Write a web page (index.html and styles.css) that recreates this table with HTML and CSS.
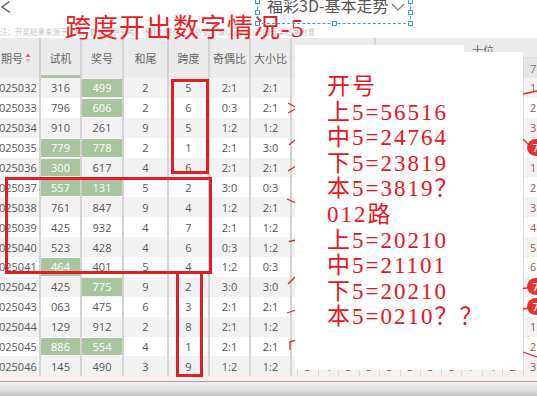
FILE: index.html
```html
<!DOCTYPE html>
<html lang="zh-CN">
<head>
<meta charset="utf-8">
<title>福彩3D-基本走势</title>
<link rel="stylesheet" href="styles.css">
</head>
<body>
<div class="page">
  <header class="topbar">
    <div class="nav">
      <svg class="back" width="12" height="14" viewBox="0 0 12 14"><polyline points="9.5,1.5 2,7 10,12.5" fill="none" stroke="#555" stroke-width="1.3"/></svg>
      <div class="apptitle">福彩3D-基本走势<svg class="caret" width="14" height="8" viewBox="0 0 14 8"><polyline points="1,1 7,7 13,1" fill="none" stroke="#777" stroke-width="1.2"/></svg></div>
    </div>
    <div class="note">注：开奖结果来源于网络，数据仅供参考，不作为最终兑奖依据，请以官方公布的开奖结果为准</div>
  </header>

  <div class="table">
    <div class="thead">
      <div class="hc qh w-qh">期号<svg class="sort" width="6" height="10" viewBox="0 0 6 10"><path d="M3 0.5 L5.6 4 H0.4Z" fill="#e85454"/><path d="M3 9.5 L5.6 6 H0.4Z" fill="#bdbdbd"/></svg></div>
      <div class="hc sj w-sj">试机</div>
      <div class="hc w-jh">奖号</div>
      <div class="hc w-hw">和尾</div>
      <div class="hc w-kd">跨度</div>
      <div class="hc w-jo">奇偶比</div>
      <div class="hc w-dx">大小比</div>
      <div class="hchart">
        <div class="hgroup"><div class="g1">百位</div><div class="g2">十位</div></div>
        <div class="hdigits"><span class="hfill"></span><span class="hd">7</span></div>
      </div>
    </div>

    <div class="tbody">
      <div class="row"><div class="c w-qh qh">025032</div><div class="c w-sj">316</div><div class="c w-jh hit">499</div><div class="c w-hw">2</div><div class="c w-kd">5</div><div class="c w-jo">2:1</div><div class="c w-dx">2:1</div><div class="chart"><span class="fill"></span><span class="cc">1</span></div></div>
      <div class="row"><div class="c w-qh qh">025033</div><div class="c w-sj">796</div><div class="c w-jh hit">606</div><div class="c w-hw">2</div><div class="c w-kd">6</div><div class="c w-jo">0:3</div><div class="c w-dx">2:1</div><div class="chart"><span class="fill"></span><span class="cc">2</span></div></div>
      <div class="row"><div class="c w-qh qh">025034</div><div class="c w-sj">910</div><div class="c w-jh">261</div><div class="c w-hw">9</div><div class="c w-kd">5</div><div class="c w-jo">1:2</div><div class="c w-dx">1:2</div><div class="chart"><span class="fill"></span><span class="cc">3</span></div></div>
      <div class="row"><div class="c w-qh qh">025035</div><div class="c w-sj hit">779</div><div class="c w-jh hit">778</div><div class="c w-hw">2</div><div class="c w-kd">1</div><div class="c w-jo">2:1</div><div class="c w-dx">3:0</div><div class="chart"><span class="fill"></span><span class="cc"><span class="ball">7</span></span></div></div>
      <div class="row"><div class="c w-qh qh">025036</div><div class="c w-sj hit">300</div><div class="c w-jh">617</div><div class="c w-hw">4</div><div class="c w-kd">6</div><div class="c w-jo">2:1</div><div class="c w-dx">2:1</div><div class="chart"><span class="fill"></span><span class="cc">1</span></div></div>
      <div class="row"><div class="c w-qh qh">025037</div><div class="c w-sj hit">557</div><div class="c w-jh hit">131</div><div class="c w-hw">5</div><div class="c w-kd">2</div><div class="c w-jo">3:0</div><div class="c w-dx">0:3</div><div class="chart"><span class="fill"></span><span class="cc">2</span></div></div>
      <div class="row"><div class="c w-qh qh">025038</div><div class="c w-sj">761</div><div class="c w-jh">847</div><div class="c w-hw">9</div><div class="c w-kd">4</div><div class="c w-jo">1:2</div><div class="c w-dx">2:1</div><div class="chart"><span class="fill"></span><span class="cc">3</span></div></div>
      <div class="row"><div class="c w-qh qh">025039</div><div class="c w-sj">425</div><div class="c w-jh">932</div><div class="c w-hw">4</div><div class="c w-kd">7</div><div class="c w-jo">2:1</div><div class="c w-dx">1:2</div><div class="chart"><span class="fill"></span><span class="cc">4</span></div></div>
      <div class="row"><div class="c w-qh qh">025040</div><div class="c w-sj">523</div><div class="c w-jh">428</div><div class="c w-hw">4</div><div class="c w-kd">6</div><div class="c w-jo">0:3</div><div class="c w-dx">1:2</div><div class="chart"><span class="fill"></span><span class="cc">5</span></div></div>
      <div class="row"><div class="c w-qh qh">025041</div><div class="c w-sj hit">464</div><div class="c w-jh">401</div><div class="c w-hw">5</div><div class="c w-kd">4</div><div class="c w-jo">1:2</div><div class="c w-dx">0:3</div><div class="chart"><span class="fill"></span><span class="cc">6</span></div></div>
      <div class="row"><div class="c w-qh qh">025042</div><div class="c w-sj">425</div><div class="c w-jh hit">775</div><div class="c w-hw">9</div><div class="c w-kd">2</div><div class="c w-jo">3:0</div><div class="c w-dx">3:0</div><div class="chart"><span class="fill"></span><span class="cc"><span class="ball">7</span></span></div></div>
      <div class="row"><div class="c w-qh qh">025043</div><div class="c w-sj">063</div><div class="c w-jh">475</div><div class="c w-hw">6</div><div class="c w-kd">3</div><div class="c w-jo">2:1</div><div class="c w-dx">2:1</div><div class="chart"><span class="fill"></span><span class="cc"><span class="ball">7</span></span></div></div>
      <div class="row"><div class="c w-qh qh">025044</div><div class="c w-sj">129</div><div class="c w-jh">912</div><div class="c w-hw">2</div><div class="c w-kd">8</div><div class="c w-jo">2:1</div><div class="c w-dx">1:2</div><div class="chart"><span class="fill"></span><span class="cc">1</span></div></div>
      <div class="row"><div class="c w-qh qh">025045</div><div class="c w-sj hit">886</div><div class="c w-jh hit">554</div><div class="c w-hw">4</div><div class="c w-kd">1</div><div class="c w-jo">2:1</div><div class="c w-dx">2:1</div><div class="chart"><span class="fill"></span><span class="cc">2</span></div></div>
      <div class="row"><div class="c w-qh qh">025046</div><div class="c w-sj">145</div><div class="c w-jh">490</div><div class="c w-hw">3</div><div class="c w-kd">9</div><div class="c w-jo">1:2</div><div class="c w-dx">1:2</div><div class="chart"><span class="cc">3</span><span class="cc">4</span><span class="cc">5</span><span class="cc">5</span><span class="cc">5</span><span class="cc">5</span><span class="cc">5</span><span class="cc">6</span><span class="cc">7</span><span class="cc">4</span><span class="cc">2</span><span class="cc">3</span></div></div>
    </div>
    <div class="tfoot"></div>
  </div>
  <div class="statusbar"></div>

  <svg class="trend" width="537" height="396" viewBox="0 0 537 396">
    <path d="M288 103 L296 107.5 M288 113 L296 108.5 M289 145 L295 140 M288 171 L296 166 M287 199 L296 203 M289 241.5 L296 240 M288 284 L296 276 M287 313 L296 310 M289 342 L296 340 M290 342 L290 350 M296 367 L298 370 M523 94 L537 91 M523 139 L531 147 M523 288.5 L530 287.5 M523 309 L530 308 M523 352 L537 357" fill="none" stroke="#e8262b" stroke-width="1.3"/>
  </svg>

  <div class="panel">
    <div class="memo">
      <div>开号</div>
      <div>上5=56516</div>
      <div>中5=24764</div>
      <div>下5=23819</div>
      <div>本5=3819？</div>
      <div>012路</div>
      <div>上5=20210</div>
      <div>中5=21101</div>
      <div>下5=20210</div>
      <div>本5=0210？？</div>
    </div>
  </div>

  <div class="bigtitle">跨度开出数字情况-5</div>

  <div class="mark m1"></div>
  <div class="mark m2"></div>
  <div class="mark m3"></div>

  <div class="selbox">
    <span class="hd-h tl"></span><span class="hd-h ml"></span><span class="hd-h bl"></span>
    <span class="hd-h bm"></span>
    <span class="hd-h tr"></span><span class="hd-h mr"></span><span class="hd-h br"></span>
  </div>
</div>
</body>
</html>
```

FILE: styles.css
```css
body {
  margin: 0;
}

.page {
  position: relative;
  width: 537px;
  height: 396px;
  overflow: hidden;
  background: #fff;
  font-family: "Open Sans", "Noto Sans CJK SC", sans-serif;
}

/* top bar */
.topbar {
  height: 38px;
}

.nav {
  display: flex;
  align-items: flex-start;
  height: 26px;
}

.back {
  flex: none;
}

.apptitle {
  display: flex;
  align-items: center;
  margin-left: 255px;
  margin-top: -3px;
  font-family: "Noto Sans CJK SC", sans-serif;
  font-size: 16px;
  line-height: 16px;
  color: #555;
  white-space: nowrap;
}

.caret {
  margin-left: 3px;
  margin-top: 3px;
}

.note {
  height: 12px;
  line-height: 12px;
  font-family: "Noto Sans CJK SC", sans-serif;
  font-size: 7.5px;
  color: #c6c6c6;
  white-space: nowrap;
  overflow: hidden;
}

/* table */
.thead {
  display: flex;
  height: 40px;
  background: #ebebeb;
}

.hc {
  flex: none;
  box-sizing: border-box;
  display: flex;
  align-items: center;
  justify-content: center;
  border-right: 2px solid #d3d3d3;
  font-family: "Noto Sans CJK SC", sans-serif;
  font-size: 11px;
  color: #666;
}

.hc.qh {
  justify-content: flex-start;
  padding-left: 1px;
}

.sort {
  margin-left: 2px;
}

.hc.sj {
  box-shadow: inset 0 -3px 0 #a9c69f;
}

.w-qh { width: 41px; }
.w-sj { width: 41px; }
.w-jh { width: 42px; }
.w-hw { width: 45px; }
.w-kd { width: 41px; }
.w-jo { width: 41px; }
.w-dx { width: 41px; }

.hchart {
  flex: none;
  width: 251px;
  display: flex;
  flex-direction: column;
}

.hgroup {
  display: flex;
  height: 20px;
  font-family: "Noto Sans CJK SC", sans-serif;
  font-size: 11px;
  color: #666;
  border-bottom: 1px solid #dcdcdc;
  box-sizing: border-box;
}

.g1 {
  width: 84px;
  box-sizing: border-box;
  border-right: 2px solid #d3d3d3;
  text-align: center;
  line-height: 24px;
}

.g2 {
  padding-left: 96px;
  line-height: 24px;
}

.hdigits {
  display: flex;
  height: 20px;
  padding-left: 5px;
}

.hfill {
  flex: none;
  width: 225.5px;
  background: repeating-linear-gradient(90deg, #dcdcdc 0 1px, transparent 1px 20.5px);
}

.hd {
  flex: none;
  width: 20.5px;
  box-sizing: border-box;
  border-left: 1px solid #d6d6d6;
  background: #e6e6e6;
  display: flex;
  align-items: center;
  justify-content: center;
  font-size: 11px;
  color: #777;
}

.row {
  display: flex;
  height: 19.9px;
}

.row:nth-child(odd) {
  background: #f2f2f2;
}

.c {
  flex: none;
  box-sizing: border-box;
  display: flex;
  align-items: center;
  justify-content: center;
  border-right: 2px solid #d3d3d3;
  font-size: 11px;
  color: #555;
  white-space: nowrap;
  overflow: hidden;
}

.c.qh {
  justify-content: flex-start;
  text-indent: -1px;
}

.c.hit {
  padding: 1px 0;
  background-color: #a8c59f;
  background-clip: content-box;
  color: #fff;
}

.chart {
  flex: none;
  display: flex;
  padding-left: 5px;
}

.fill {
  flex: none;
  width: 225.5px;
  background: repeating-linear-gradient(90deg, #e3e3e3 0 1px, transparent 1px 20.5px);
}

.cc {
  flex: none;
  width: 20.5px;
  box-sizing: border-box;
  border-left: 1px solid #dadada;
  display: flex;
  align-items: center;
  justify-content: center;
  font-size: 11px;
  color: #b34a4a;
}

.ball {
  flex: none;
  width: 17px;
  height: 17px;
  margin-left: 5px;
  border-radius: 50%;
  background: #e8312f;
  color: #fff;
  font-weight: 600;
  display: flex;
  align-items: center;
  justify-content: center;
}

.tfoot {
  height: 4.5px;
  background: #fcefea;
}

.statusbar {
  height: 15px;
  box-sizing: border-box;
  border-top: 1px solid #a5a5a5;
  background: linear-gradient(#efefef, #dedede 60%, #c6c6c6);
}

/* overlays */
.trend {
  position: absolute;
  left: 0;
  top: 0;
  pointer-events: none;
}

.panel {
  position: absolute;
  left: 295px;
  top: 52px;
  width: 228px;
  height: 318px;
  background: #fff;
}

.panel::before {
  content: "";
  position: absolute;
  left: 0;
  top: -7px;
  width: 169px;
  height: 7px;
  background: #fff;
}

.memo {
  padding: 22px 0 0 32px;
  color: #e8141c;
  font-family: "Liberation Serif", "Noto Sans CJK SC", serif;
  font-size: 23px;
  line-height: 25.6px;
  letter-spacing: 2px;
}

.memo div {
  height: 25.6px;
  white-space: nowrap;
}

.bigtitle {
  position: absolute;
  left: 65px;
  top: 14px;
  font-family: "Liberation Serif", "Noto Sans CJK SC", serif;
  font-size: 26px;
  line-height: 30px;
  letter-spacing: 1px;
  color: #ee1c25;
  white-space: nowrap;
}

.mark {
  position: absolute;
  box-sizing: border-box;
  border: 3px solid #e41d24;
}

.m1 { left: 171px; top: 79px; width: 37.5px; height: 95px; }
.m2 { left: 5px; top: 177px; width: 207px; height: 97px; }
.m3 { left: 176px; top: 270.5px; width: 26.5px; height: 106px; }

.selbox {
  position: absolute;
  left: 257px;
  top: 2px;
  width: 154px;
  height: 22px;
  box-sizing: border-box;
  border: 1px dashed #3f9bd6;
  border-top: none;
}

.hd-h {
  position: absolute;
  width: 5px;
  height: 5px;
  box-sizing: border-box;
  border: 1px solid #3f9bd6;
  background: #fff;
}

.tl { left: -3px; top: -3px; }
.ml { left: -3px; top: 8px; }
.bl { left: -3px; bottom: -3px; }
.bm { left: 74px; bottom: -3px; }
.tr { right: -3px; top: -3px; }
.mr { right: -3px; top: 8px; }
.br { right: -3px; bottom: -3px; }
```
